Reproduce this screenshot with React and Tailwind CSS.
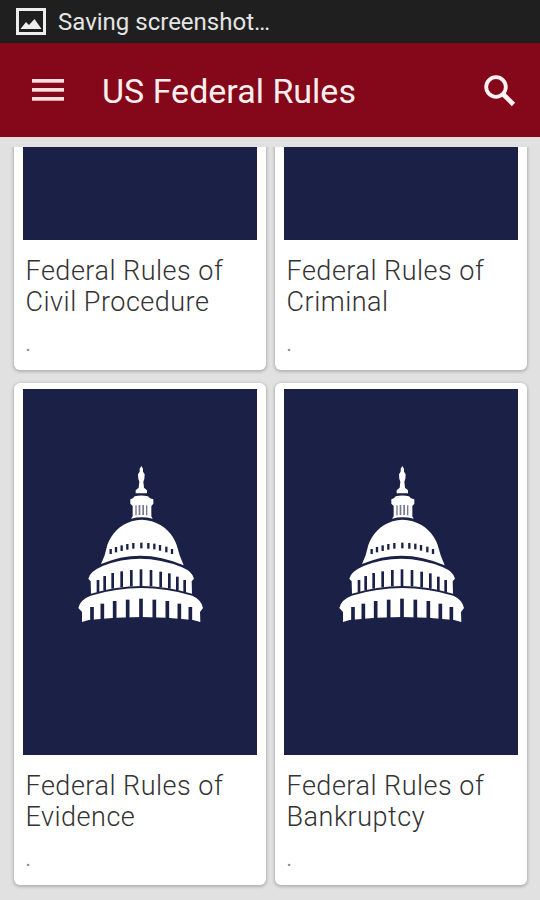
const rules = [
  { id: 1, title: 'Federal Rules of Civil Procedure' },
  { id: 2, title: 'Federal Rules of Criminal' },
  { id: 3, title: 'Federal Rules of Evidence' },
  { id: 4, title: 'Federal Rules of Bankruptcy' },
];

// [x, top, bottom] of each opening, per level of the dome
const smallWindows = [
  [122, 282, 297], [138, 276, 292], [155, 271, 288], [172, 267, 284], [190, 264, 281], [214, 263, 280],
  [235, 264, 281], [253, 266, 283], [270, 270, 287], [289, 275, 292], [306, 282, 297],
];
const middleWindows = [
  [84, 375, 412], [104, 363, 406], [128, 354, 401], [155, 349, 397], [184, 345, 394], [213, 343, 393],
  [243, 345, 394], [272, 350, 397], [298, 355, 401], [322, 365, 406], [344, 375, 412],
];
const lowerWindows = [
  [66, 456, 500], [97, 446, 495], [134, 438, 491], [173, 434, 489], [213, 431, 488],
  [253, 434, 489], [292, 438, 491], [328, 446, 495], [361, 456, 500],
];

function Windows({ items, width }) {
  return items.map(([x, top, bottom]) => (
    <rect key={x} x={x - width / 2} y={top} width={width} height={bottom - top} fill="#1b2047" />
  ));
}

function CapitolDome() {
  return (
    <svg width="145" height="175" viewBox="0 0 435 525" fill="#fff">
      {/* statue */}
      <path d="M214 33 L219 41 L219 50 L224 58 L223 72 L220 80 L222 98 L231 106 L231 115 L197 115 L197 106 L206 98 L208 80 L205 72 L204 58 L209 50 L209 41 Z" />
      {/* lantern */}
      <path d="M194 124 Q214 119 234 124 Q238 131 250 133 L250 146 L244 153 L244 184 L248 191 Q214 183 183 191 L188 184 L188 153 L181 146 L181 133 Q190 131 194 124 Z" />
      <g fill="#1b2047" opacity=".6">
        <rect x="196" y="151" width="4" height="30" />
        <rect x="206" y="150" width="5" height="30" />
        <rect x="217" y="150" width="5" height="30" />
        <rect x="228" y="151" width="4" height="30" />
      </g>
      {/* dome */}
      <path d="M185 199 Q214 190 245 199 C283 210 309 238 320 270 L329 301 L341 331 Q214 275 93 327 L104 301 L112 270 C124 238 148 210 185 199 Z" />
      <Windows items={smallWindows} width={7} />
      {/* middle level */}
      <path d="M98 333 Q214 288 336 337 Q367 350 372 371 L365 379 L366 416 Q214 370 63 416 L62 379 L55 371 Q59 350 98 333 Z" />
      <Windows items={middleWindows} width={8} />
      {/* lower level */}
      <path d="M62 422 Q214 376 367 422 Q394 434 399 459 L390 471 L391 501 L369 495 Q214 477 56 495 L36 501 L36 471 L25 459 Q30 434 62 422 Z" />
      <Windows items={lowerWindows} width={11} />
    </svg>
  );
}

function RuleCard({ title }) {
  return (
    <div className="h-[502px] rounded-[6px] bg-white px-[9px] pt-[6px] shadow-[0_1px_3px_1px_rgba(0,0,0,0.2)]">
      <div className="h-[366px] bg-[#1b2047] pt-[66px] pl-[47px]">
        <CapitolDome />
      </div>
      <div className="pt-[16px] pl-[2.5px]">
        <h2 className="h-[62px] w-[226px] text-[27px] leading-[31px] font-light tracking-[0.5px] text-[#333]">{title}</h2>
        <p className="pt-[12px] text-[20px] leading-[28px] text-[#888]">.</p>
      </div>
    </div>
  );
}

export default function App() {
  return (
    <div className="flex h-[900px] w-[540px] flex-col overflow-hidden bg-[#e1e1e1] font-[Roboto,sans-serif]">
      <div className="flex h-[43px] shrink-0 items-center bg-[#1f1f1f] pl-[16px] text-[#e4e4e4]">
        <svg width="30" height="27" viewBox="0 0 30 27" fill="none">
          <rect x="1.500" y="1.500" width="27" height="24" stroke="#eee" strokeWidth="3" />
          <path d="M4.500 21 L10 14 L13 17 L18.500 11 L25.500 21 Z" fill="#eee" />
        </svg>
        <span className="pl-[12px] text-[24px] leading-[28px]">Saving screenshot…</span>
      </div>

      <header className="flex h-[95px] shrink-0 items-center border-b border-[#f0e0dc] bg-[#85071a] text-[#fbeeee]">
        <svg className="ml-[32px]" width="32" height="24" viewBox="0 0 32 24" fill="#fbdfe2">
          <rect y="1" width="32" height="3.700" />
          <rect y="10" width="32" height="3.700" />
          <rect y="19" width="32" height="3.700" />
        </svg>
        <h1 className="ml-[38px] flex-1 pt-[2px] text-[34px] leading-[40px]">US Federal Rules</h1>
        <svg className="mt-[2px] mr-[24px]" width="32" height="32" viewBox="0 0 32 32" fill="none" stroke="#fff3f3">
          <circle cx="12" cy="12" r="9.800" strokeWidth="3.800" />
          <path d="M19 19 L29.500 29.500" strokeWidth="4.600" />
        </svg>
      </header>

      {/* scrolled list, first row is cut by the header */}
      <main className="mt-[9px] flex flex-1 flex-col justify-end overflow-hidden px-[14px] pb-[15px]">
        <div className="grid grid-cols-[252px_252px] gap-x-[9px] gap-y-[13px]">
          {rules.map((rule) => (
            <RuleCard key={rule.id} title={rule.title} />
          ))}
        </div>
      </main>
    </div>
  );
}
